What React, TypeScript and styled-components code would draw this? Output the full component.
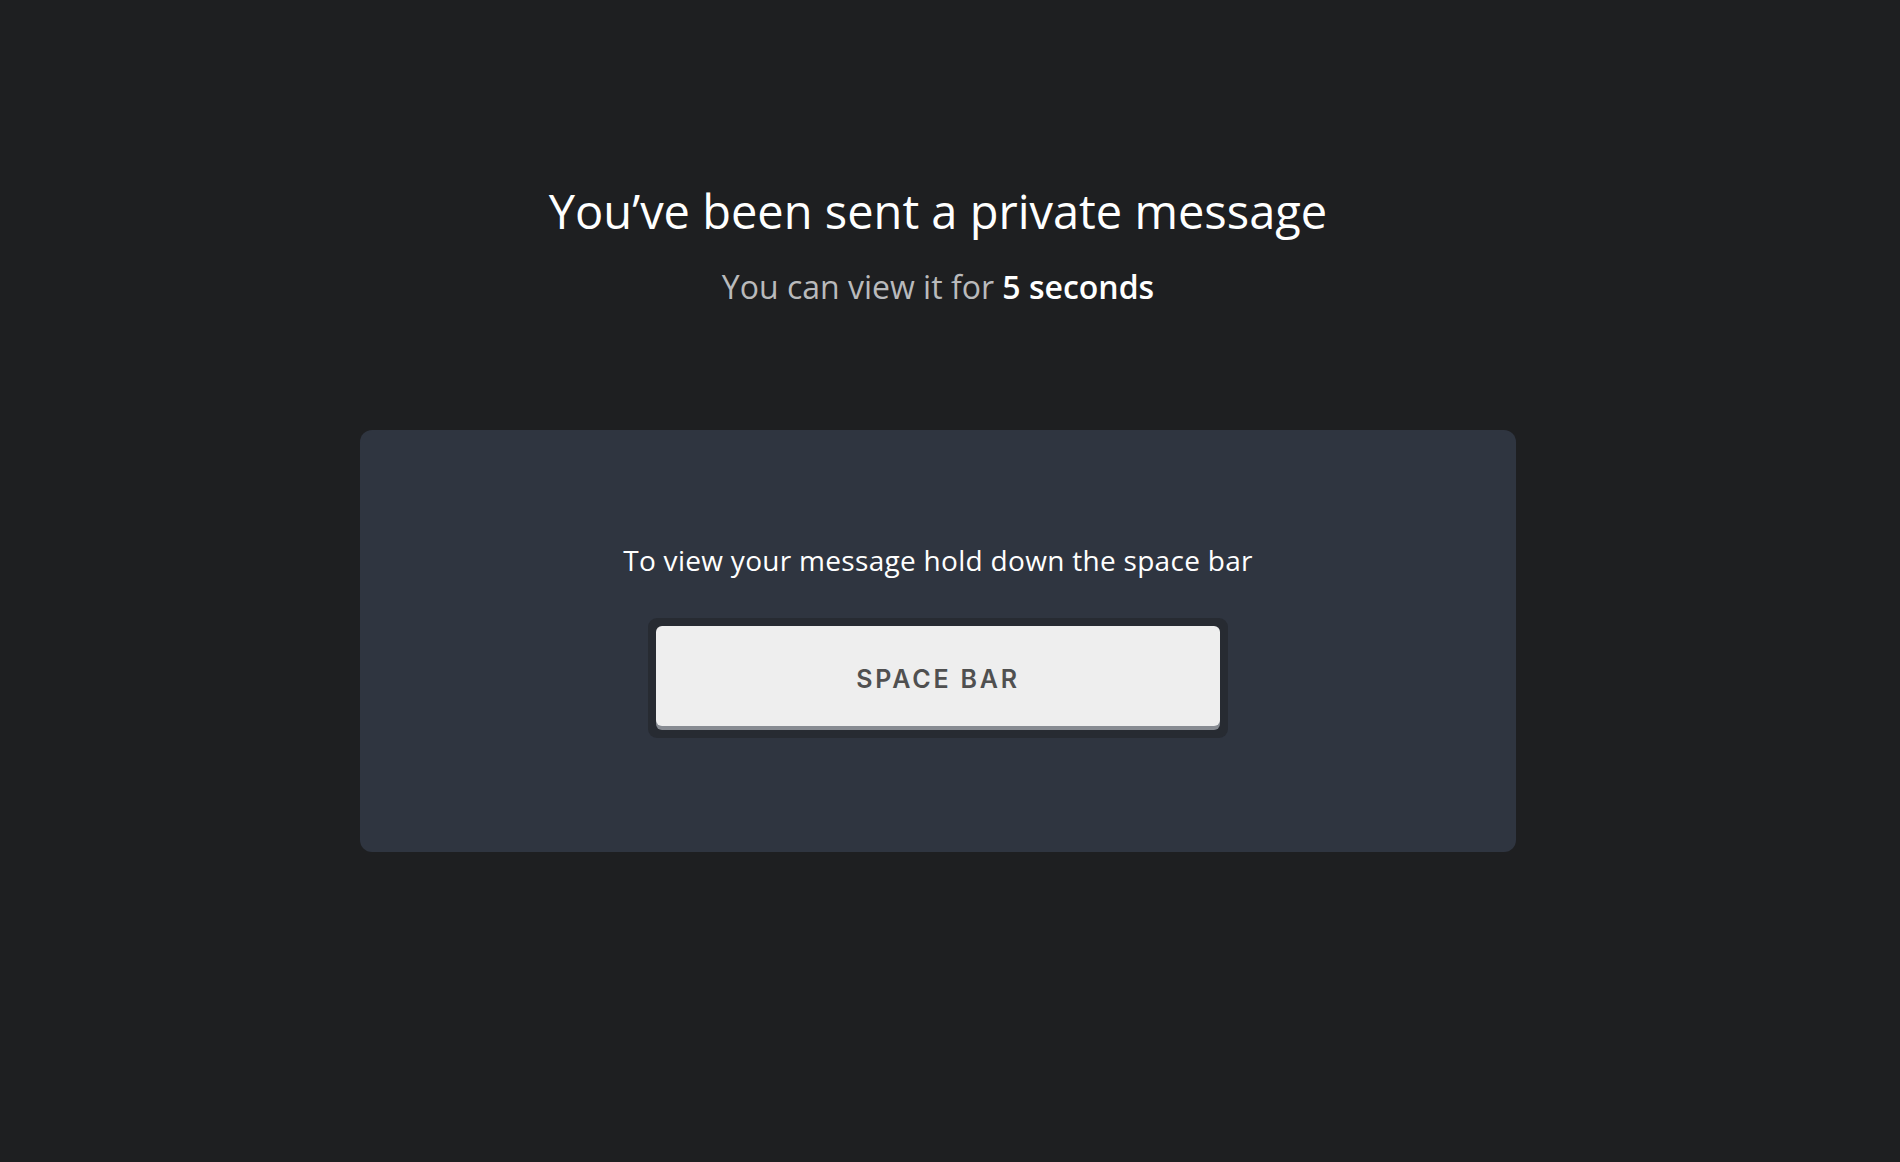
import React from "react";
import styled, { createGlobalStyle } from "styled-components";

const Global = createGlobalStyle`
  html, body { margin: 0; padding: 0; background: #1e1f21; }
  body { font-family: "Open Sans", "Noto Sans", sans-serif; }
`;

const Page = styled.main`
  min-height: 1162px;
  display: flex;
  flex-direction: column;
  align-items: center;
  padding: 180px 24px 0 0;
  box-sizing: border-box;
`;

const Title = styled.h1`
  margin: 0;
  font-size: 47px;
  font-weight: 400;
  color: #ffffff;
  line-height: 62px;
`;

const Subtitle = styled.p`
  margin: 24px 0 0;
  font-size: 32px;
  font-weight: 400;
  color: #b9babc;
  line-height: 42px;
  strong { color: #ffffff; font-weight: 600; }
`;

const Card = styled.section`
  margin-top: 122px;
  width: 1156px;
  height: 422px;
  box-sizing: border-box;
  background: #2f3540;
  border-radius: 12px;
  display: flex;
  flex-direction: column;
  align-items: center;
  padding-top: 110px;
`;

const Instruction = styled.p`
  margin: 0;
  font-size: 28px;
  color: #ffffff;
  line-height: 40px;
  letter-spacing: 0.3px;
`;

const KeyWell = styled.div`
  margin-top: 38px;
  padding: 8px;
  background: #272b32;
  border-radius: 9px;
`;

const Key = styled.div`
  width: 564px;
  height: 100px;
  box-sizing: border-box;
  padding-top: 5px;
  background: #eeeeee;
  border-radius: 6px;
  box-shadow: 0 4px 0 #878b92;
  display: flex;
  align-items: center;
  justify-content: center;
  font-family: "Inter", "Open Sans", sans-serif;
  font-weight: 600;
  font-size: 25px;
  letter-spacing: 2.8px;
  color: #505050;
  margin-bottom: 4px;
`;

export default function App() {
  return (
    <>
      <Global />
      <Page>
        <Title>You’ve been sent a private message</Title>
        <Subtitle>
          You can view it for <strong>5 seconds</strong>
        </Subtitle>
        <Card>
          <Instruction>To view your message hold down the space bar</Instruction>
          <KeyWell>
            <Key>SPACE BAR</Key>
          </KeyWell>
        </Card>
      </Page>
    </>
  );
}
